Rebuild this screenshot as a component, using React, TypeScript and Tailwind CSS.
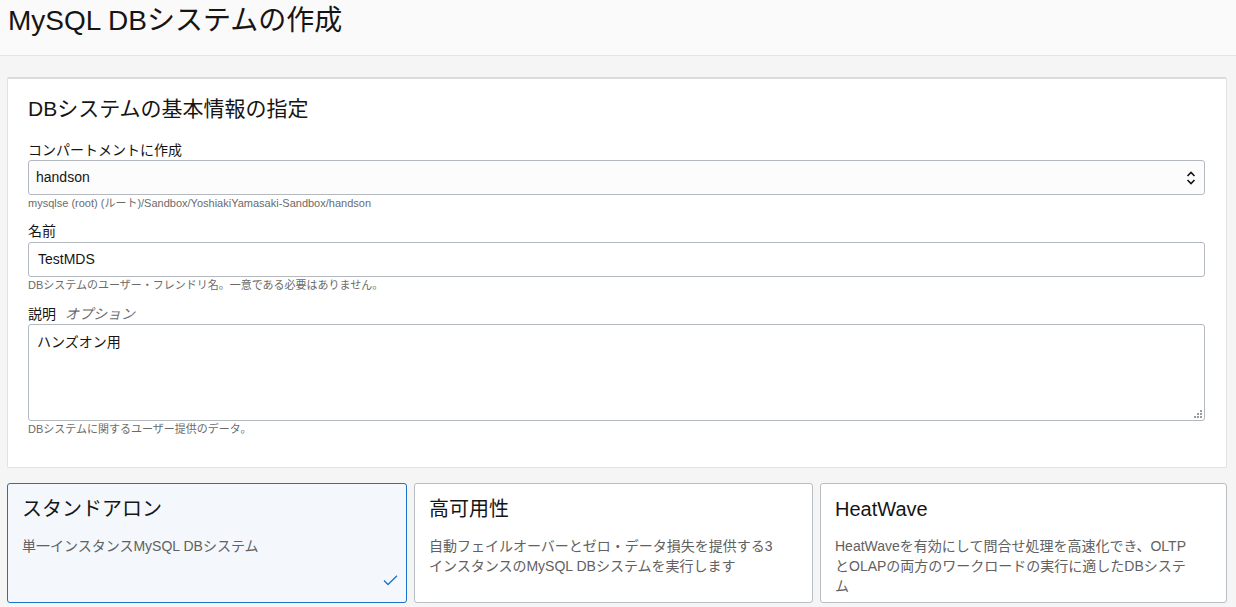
import React from "react";

const FONT = { fontFamily: '"Liberation Sans", Arial, "Noto Sans CJK JP", sans-serif' };

function Label({ children }: { children: React.ReactNode }) {
  return <div className="text-[14px] leading-[20px] text-[#161513]">{children}</div>;
}

function Helper({ children }: { children: React.ReactNode }) {
  return <div className="text-[11px] leading-[16px] text-[#6b6b6b]">{children}</div>;
}

function Card({
  title,
  lines,
  selected,
}: {
  title: string;
  lines: string[];
  selected?: boolean;
}) {
  return (
    <div
      className={
        "relative h-[120px] rounded-[3px] border px-[14px] pt-[11px] " +
        (selected ? "border-[#1c72c8] bg-[#f4f8fc]" : "border-[#b9bdc4] bg-white")
      }
    >
      <div className="text-[20px] leading-[28px] text-[#161513] whitespace-nowrap">{title}</div>
      <div className="mt-[13px] text-[14px] leading-[20px] text-[#616161] whitespace-nowrap">
        {lines.map((l, i) => (
          <div key={i}>{l}</div>
        ))}
      </div>
      {selected && (
        <svg
          className="absolute right-[8px] bottom-[16px]"
          width="15"
          height="11"
          viewBox="0 0 15 11"
          fill="none"
        >
          <path d="M1 5.5 L5 9.5 L14 0.8" stroke="#1c72c8" strokeWidth="1.3" />
        </svg>
      )}
    </div>
  );
}

export default function App() {
  return (
    <div className="min-h-[607px] bg-[#f5f5f5]" style={FONT}>
      <div className="h-[56px] border-b border-[#e4e4e4] bg-[#fafafa] px-[8px]">
        <h1 className="text-[28px] leading-[42px] text-[#161513]">MySQL DBシステムの作成</h1>
      </div>
      <div className="pl-[7px] pr-[9px] pt-[21px] pb-[4px]">
        <div className="rounded-[2px] border border-[#e2e2e2] border-t-[2px] border-t-[#dcdcdc] bg-white pl-[20px] pr-[21px] pt-[16px] pb-[30px]">
          <div className="text-[21px] leading-[28px] text-[#161513]">DBシステムの基本情報の指定</div>
          <div className="mt-[17px]">
            <Label>コンパートメントに作成</Label>
            <div className="flex h-[35px] items-center justify-between rounded-[3px] border border-[#b4b9c0] bg-[#fcfcfc] pl-[7px] pr-[8px]">
              <span className="text-[14px] text-[#161513]">handson</span>
              <svg width="10" height="16" viewBox="0 0 10 16" fill="none">
                <path d="M1.5 6 L5 2.5 L8.5 6" stroke="#161513" strokeWidth="1.6" />
                <path d="M1.5 10 L5 13.5 L8.5 10" stroke="#161513" strokeWidth="1.6" />
              </svg>
            </div>
            <Helper>mysqlse (root) (ルート)/Sandbox/YoshiakiYamasaki-Sandbox/handson</Helper>
          </div>
          <div className="mt-[10px]">
            <Label>名前</Label>
            <div className="mt-[1px] flex h-[35px] items-center rounded-[3px] border border-[#b4b9c0] bg-white pl-[9px]">
              <span className="text-[14px] text-[#161513]">TestMDS</span>
            </div>
            <Helper>DBシステムのユーザー・フレンドリ名。一意である必要はありません。</Helper>
          </div>
          <div className="mt-[11px]">
            <Label>
              説明<span className="ml-[9px] italic text-[#6b6b6b]">オプション</span>
            </Label>
            <div className="relative h-[97px] rounded-[3px] border border-[#b4b9c0] bg-white pl-[8px] pt-[5px]">
              <span className="text-[14px] leading-[20px] text-[#161513]">ハンズオン用</span>
              <svg className="absolute right-[2px] bottom-[2px]" width="8" height="8" viewBox="0 0 8 8">
                <rect x="6" y="0" width="2" height="2" fill="#9a9a9a" />
                <rect x="3" y="3" width="2" height="2" fill="#9a9a9a" />
                <rect x="6" y="3" width="2" height="2" fill="#9a9a9a" />
                <rect x="0" y="6" width="2" height="2" fill="#9a9a9a" />
                <rect x="3" y="6" width="2" height="2" fill="#9a9a9a" />
                <rect x="6" y="6" width="2" height="2" fill="#9a9a9a" />
              </svg>
            </div>
            <Helper>DBシステムに関するユーザー提供のデータ。</Helper>
          </div>
        </div>
        <div className="mt-[15px] grid grid-cols-[400px_399px_1fr] gap-[7px]">
          <Card title="スタンドアロン" lines={["単一インスタンスMySQL DBシステム"]} selected />
          <Card
            title="高可用性"
            lines={["自動フェイルオーバーとゼロ・データ損失を提供する3", "インスタンスのMySQL DBシステムを実行します"]}
          />
          <Card
            title="HeatWave"
            lines={[
              "HeatWaveを有効にして問合せ処理を高速化でき、OLTP",
              "とOLAPの両方のワークロードの実行に適したDBシステ",
              "ム",
            ]}
          />
        </div>
      </div>
    </div>
  );
}
